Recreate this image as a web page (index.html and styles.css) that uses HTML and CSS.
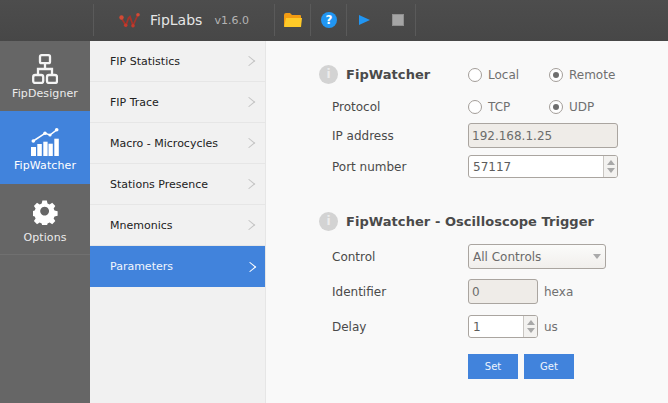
FILE: index.html
```html
<!DOCTYPE html>
<html lang="en">
<head>
<meta charset="utf-8">
<title>FipLabs</title>
<link rel="stylesheet" href="styles.css">
</head>
<body>
<div class="app">
  <header class="topbar">
    <div class="brand">
      <svg class="logo" width="22" height="15" viewBox="0 0 22 15"><path d="M2 4.500 L7 12.500 L9.500 5 L11 3.500 L14 12.500 L19 1.500" fill="none" stroke="#a5332a" stroke-width="1.700"/><path d="M9 4.500 L13 8" fill="none" stroke="#a5332a" stroke-width="1"/><circle cx="2.500" cy="4.500" r="2.200" fill="#d24a35"/><circle cx="6.700" cy="12.200" r="1.800" fill="#c43a2c"/><circle cx="14" cy="12.800" r="1.800" fill="#c43a2c"/><circle cx="19" cy="1.800" r="1.800" fill="#d24a35"/></svg>
      <span class="app-name">FipLabs</span>
      <span class="version">v1.6.0</span>
    </div>
    <div class="tool">
      <svg width="18" height="14" viewBox="0 0 18 14"><path d="M0 2 Q0 0 2 0 H6 L8 2 H16 Q17 2 17 3 V13 H0Z" fill="#f39c12"/><path d="M2 5 H18 L17 14 H0 Z" fill="#ffca28"/></svg>
    </div>
    <div class="tool">
      <svg width="16" height="16" viewBox="0 0 16 16"><circle cx="8" cy="8" r="8" fill="#2196f3"/><text x="8" y="12" class="help-mark" text-anchor="middle">?</text></svg>
    </div>
    <div class="tool tool-play">
      <svg width="11" height="10" viewBox="0 0 11 10"><path d="M0 0 L11 5 L0 10Z" fill="#2196f3"/></svg>
    </div>
    <div class="tool tool-stop"><span class="stop"></span></div>
  </header>
  <div class="body">
    <nav class="rail">
      <a class="rail-item item-designer">
        <svg width="26" height="30" viewBox="0 0 26 30" fill="none" stroke="#f4f4f4" stroke-width="2.300"><rect x="8" y="1.200" width="10" height="8" rx="1.500"/><path d="M13 9 V15 M6 21 V15 H20 V21"/><rect x="1.200" y="21" width="10" height="8" rx="2"/><rect x="15" y="21" width="10" height="8" rx="2"/></svg>
        <span>FipDesigner</span>
      </a>
      <a class="rail-item item-watcher is-active">
        <svg width="28" height="28" viewBox="0 0 28 28"><g fill="#fff"><rect x="0" y="19" width="5" height="9"/><rect x="6.300" y="16" width="4.500" height="12"/><rect x="12.300" y="13.700" width="4.300" height="14.300"/><rect x="17.500" y="15.700" width="4.300" height="12.300"/><rect x="23.300" y="10.700" width="4.500" height="17.300"/><circle cx="2.300" cy="13" r="1.800"/><circle cx="14" cy="5.300" r="1.800"/><circle cx="19" cy="7" r="1.600"/><circle cx="25.700" cy="1.800" r="1.800"/></g><path d="M2.300 13 L14 5.300 L19 7 L25.700 1.800" fill="none" stroke="#fff" stroke-width="1.500"/></svg>
        <span>FipWatcher</span>
      </a>
      <a class="rail-item item-options">
        <svg width="25" height="26" viewBox="0 0 26 26"><path fill="#fff" fill-rule="evenodd" d="M10.500 1 h5 l.8 3.500 2.300 1 3-1.900 3.500 3.500-1.900 3 1 2.300 3.500.8 v5 l-3.500.8-1 2.300 1.900 3-3.500 3.500-3-1.900-2.300 1-.8 3.500 h-5 l-.8-3.500-2.300-1-3 1.900-3.500-3.500 1.900-3-1-2.300-3.500-.8 v-5 l3.500-.8 1-2.300-1.900-3 3.500-3.500 3 1.900 2.300-1z M13 8 a5 5 0 1 0 .01 0z" transform="translate(1.040 1.040) scale(.92) translate(-1 -1)"/></svg>
        <span>Options</span>
      </a>
    </nav>
    <aside class="submenu">
      <a class="sub-item">FIP Statistics<span class="chev"></span></a>
      <a class="sub-item">FIP Trace<span class="chev"></span></a>
      <a class="sub-item">Macro - Microcycles<span class="chev"></span></a>
      <a class="sub-item">Stations Presence<span class="chev"></span></a>
      <a class="sub-item">Mnemonics<span class="chev"></span></a>
      <a class="sub-item is-active">Parameters<span class="chev"></span></a>
    </aside>
    <main class="content">
      <section class="panel">
        <div class="row head-row">
          <span class="info">i</span>
          <h2 class="title">FipWatcher</h2>
          <label class="radio"><span class="dot"></span>Local</label>
          <label class="radio"><span class="dot is-on"></span>Remote</label>
        </div>
        <div class="row proto-row">
          <span class="label">Protocol</span>
          <label class="radio"><span class="dot"></span>TCP</label>
          <label class="radio"><span class="dot is-on"></span>UDP</label>
        </div>
        <div class="row ip-row">
          <span class="label">IP address</span>
          <span class="field is-disabled wide">192.168.1.25</span>
        </div>
        <div class="row port-row">
          <span class="label">Port number</span>
          <span class="field spin wide"><span class="val">57117</span><span class="arrows"><i class="up"></i><i class="down"></i></span></span>
        </div>
      </section>
      <section class="panel second">
        <div class="row head-row">
          <span class="info">i</span>
          <h2 class="title">FipWatcher - Oscilloscope Trigger</h2>
        </div>
        <div class="row ctrl-row">
          <span class="label">Control</span>
          <span class="field select">All Controls<i class="caret"></i></span>
        </div>
        <div class="row id-row">
          <span class="label">Identifier</span>
          <span class="field is-disabled short">0</span>
          <span class="unit">hexa</span>
        </div>
        <div class="row delay-row">
          <span class="label">Delay</span>
          <span class="field spin short"><span class="val">1</span><span class="arrows"><i class="up"></i><i class="down"></i></span></span>
          <span class="unit">us</span>
        </div>
        <div class="actions">
          <button class="btn">Set</button>
          <button class="btn">Get</button>
        </div>
      </section>
    </main>
  </div>
</div>
</body>
</html>
```
FILE: styles.css
```css
* { box-sizing: border-box; }
html, body { margin: 0; height: 100%; }
body { font-family: "DejaVu Sans", sans-serif; font-size: 12px; color: #4a4a4a; overflow: hidden; }
.app { width: 668px; height: 403px; display: flex; flex-direction: column; }
.topbar { height: 41px; flex: none; background: linear-gradient(#4d4d4d, #474747); display: flex; padding: 4px 0 5px 93px; }
.brand { width: 181px; display: flex; align-items: center; padding-left: 25px; border-left: 1px solid #5a5a5a; }
.logo { flex: none; margin-right: 9px; }
.app-name { font-size: 14px; color: #e6e6e6; margin-right: 12px; }
.version { font-size: 11px; color: #b4b4b4; }
.tool { width: 36px; display: flex; align-items: center; justify-content: center; border-left: 1px solid #5a5a5a; }
.tool-play { width: 35px; }
.tool-stop { width: 35px; border-left: 0; border-right: 1px solid #5a5a5a; }
.help-mark { font-size: 12px; font-weight: 700; fill: #fff; font-family: "DejaVu Sans", sans-serif; }
.stop { width: 12px; height: 12px; background: #a5a5a5; border: 1px solid #8f8f8f; }
.body { flex: 1; display: flex; min-height: 0; }
.rail { width: 90px; flex: none; background: #666; display: flex; flex-direction: column; }
.rail-item { display: flex; flex-direction: column; align-items: center; justify-content: flex-end; font-size: 11px; letter-spacing: .1px; color: #ececec; }
.item-designer { height: 70px; padding-bottom: 11px; gap: 3px; }
.item-watcher { height: 73px; padding-bottom: 12px; gap: 3px; background: #4183dc; color: #fff; }
.item-options { height: 71px; padding-bottom: 10px; gap: 6px; border-bottom: 1px solid #707070; }
.submenu { width: 176px; flex: none; background: #f1f1f1; border-right: 1px solid #e6e6e6; }
.sub-item { height: 41px; display: flex; align-items: center; justify-content: space-between; padding: 0 12px 0 20px; font-size: 11px; color: #222; border-bottom: 1px solid #e6e6e6; }
.sub-item.is-active { background: #4183dc; color: #f2f6fc; border-bottom: 0; width: 175px; padding-right: 11px; }
.chev { width: 8px; height: 8px; border-top: 1px solid #c4c4c4; border-right: 1px solid #c4c4c4; transform: rotate(45deg) skew(-6deg, -6deg); }
.is-active .chev { border-color: #fff; border-width: 1.500px; }
.content { flex: 1; background: #f9f9f9; padding: 24px 0 0 53px; }
.second { margin-top: 34px; }
.row { display: flex; align-items: center; }
.head-row { height: 19px; }
.info { width: 19px; height: 19px; border-radius: 50%; background: #d3d3d3; color: #ececec; font: 700 12px/19px "DejaVu Sans", sans-serif; text-align: center; flex: none; margin-right: 8px; }
.title { margin: 0; font-size: 13px; font-weight: 700; color: #4a4a4a; letter-spacing: .06px; }
.head-row .title { width: 122px; }
.second .head-row .title { width: auto; }
.radio { display: flex; align-items: center; width: 81px; color: #707070; }
.dot { width: 14px; height: 14px; border-radius: 50%; border: 1px solid #a39e99; background: #fff; margin-right: 6px; display: flex; align-items: center; justify-content: center; flex: none; }
.dot.is-on::after { content: ""; width: 6px; height: 6px; border-radius: 50%; background: #6e6e6e; }
.label { width: 149px; padding-left: 13px; flex: none; color: #4a4a4a; }
.proto-row { margin-top: 14px; height: 18px; }
.ip-row { margin-top: 7px; height: 25px; }
.port-row { margin-top: 7px; height: 23px; }
.field { height: 100%; border: 1px solid #aaa5a0; border-radius: 3px; background: #fff; display: flex; align-items: center; color: #5c5c5c; }
.field.is-disabled { background: #efece8; padding-left: 3px; color: #6c6c6c; }
.wide { width: 150px; }
.short { width: 70px; }
.spin { padding-left: 4px; position: relative; overflow: hidden; }
.spin .val { flex: 1; }
.arrows { width: 14px; align-self: stretch; border-left: 1px solid #c9c6c2; background: #f3f2f0; display: flex; flex-direction: column; align-items: center; justify-content: center; gap: 3px; }
.up { border: 4px solid transparent; border-top: 0; border-bottom: 5px solid #a8a8a8; }
.down { border: 4px solid transparent; border-bottom: 0; border-top: 5px solid #a8a8a8; }
.ctrl-row { margin-top: 13px; height: 25px; }
.id-row { margin-top: 10px; height: 25px; }
.delay-row { margin-top: 11px; height: 23px; }
.select { width: 138px; padding: 0 4px 0 4px; justify-content: space-between; background: linear-gradient(#fbfbfa, #f1efec); color: #6a6a6a; }
.caret { border: 4.500px solid transparent; border-bottom: 0; border-top: 5px solid #aaa; }
.unit { margin-left: 6px; color: #707070; }
.actions { display: flex; gap: 6px; margin: 16px 0 0 149px; }
.btn { width: 50px; height: 25px; border: 0; padding: 0; background: #4183dc; color: #eef4fc; font: 10px "DejaVu Sans", sans-serif; }
```
